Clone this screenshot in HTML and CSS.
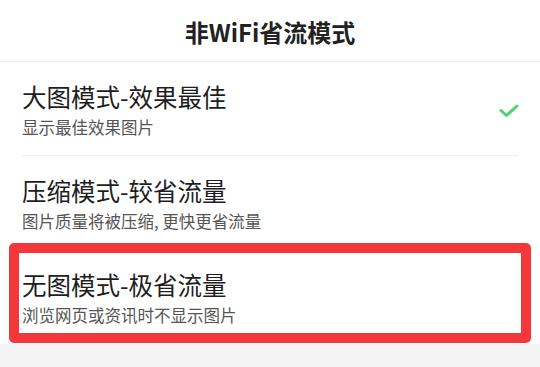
FILE: index.html
```html
<!DOCTYPE html>
<html>
<head>
  <meta charset="utf-8">
  <title>非WiFi省流模式</title>
  <link rel="stylesheet" href="styles.css">
</head>
<body>
  <div class="header">
    <h1>非WiFi省流模式</h1>
  </div>

  <div class="mode-list">
    <div class="mode-item">
      <div class="mode-text">
        <div class="mode-title">大图模式-效果最佳</div>
        <div class="mode-desc">显示最佳效果图片</div>
      </div>
      <svg class="mode-check" width="20" height="14" viewBox="0 0 20 14">
        <path d="M2 6.5 L7.5 11.5 L18 2" fill="none" stroke="#4cd36a" stroke-width="3" stroke-linecap="round" stroke-linejoin="round"/>
      </svg>
    </div>

    <div class="mode-item">
      <div class="mode-text">
        <div class="mode-title">压缩模式-较省流量</div>
        <div class="mode-desc">图片质量将被压缩, 更快更省流量</div>
      </div>
    </div>

    <div class="mode-item last">
      <div class="mode-text">
        <div class="mode-title">无图模式-极省流量</div>
        <div class="mode-desc">浏览网页或资讯时不显示图片</div>
      </div>
      <!-- 标注框 -->
      <div class="highlight"></div>
    </div>
  </div>
</body>
</html>
```

FILE: styles.css
```css
body {
  margin: 0;
  background: #f4f4f4;
  font-family: "Noto Sans CJK SC", "Noto Sans", sans-serif;
  color: #222;
}

.header {
  height: 61px;
  background: white;
  border-bottom: 1px solid #efefef;
  display: flex;
  align-items: center;
  justify-content: center;
}

.header h1 {
  margin: 0;
  font-size: 24px;
  line-height: 30px;
  font-weight: bold;
  color: #222;
  padding-top: 2px;
}

.mode-list {
  background: white;
}

.mode-item {
  position: relative;
  margin: 0 22px;
  padding: 20px 0 17px 0;
  border-bottom: 1px solid #eeeeee;
  display: flex;
  align-items: center;
  justify-content: space-between;
}

.mode-item.last {
  border-bottom: none;
  padding-bottom: 18px;
}

.mode-title {
  font-size: 24.5px;
  line-height: 30px;
  color: #1e1e1e;
}

.mode-desc {
  margin-top: 4px;
  font-size: 16.5px;
  line-height: 22px;
  color: #555;
}

.mode-check {
  margin-right: -1px;
  margin-top: 2px;
}

.highlight {
  position: absolute;
  left: -13px;
  top: -7px;
  width: 502px;
  height: 80px;
  border: 10px solid #f3373a;
  border-radius: 5px;
}
```
